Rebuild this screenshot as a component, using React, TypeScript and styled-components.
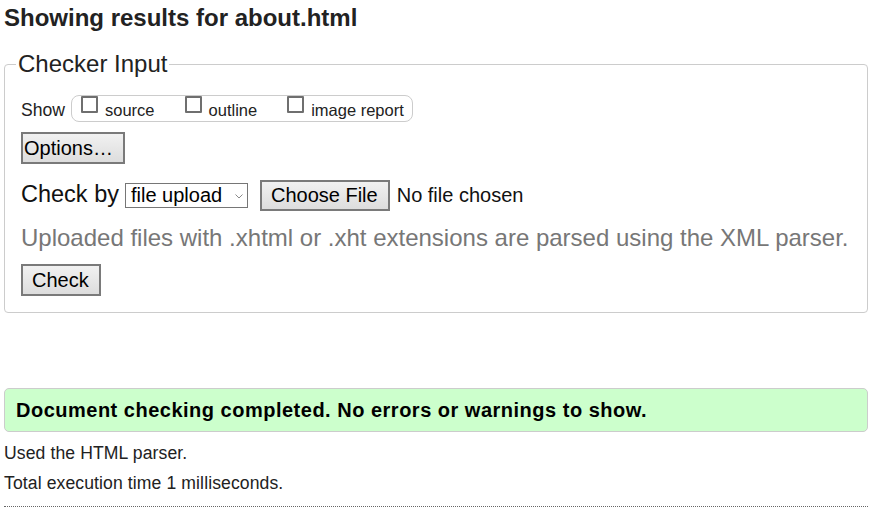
import React from "react";
import styled, { createGlobalStyle } from "styled-components";

const GlobalStyle = createGlobalStyle`
    html, body {
        margin: 0;
        padding: 0;
        background: #fff;
    }
    body {
        font-family: "Liberation Sans", Arial, sans-serif;
        color: #222;
    }
`

const Page = styled.div`
    padding: 4px 14px 0 4px;
`
const Heading = styled.h2`
    margin: 0;
    font-size: 24px;
    line-height: 28px;
    font-weight: bold;
`
const Fieldset = styled.fieldset`
    margin: 18px 0 0;
    padding: 0 16px 16px 11px;
    min-width: 0;
    border: 1px solid #ccc;
    border-radius: 4px;
`
const Legend = styled.legend`
    padding: 0 2px;
    font-size: 24px;
    line-height: 28px;
`
const FormBody = styled.div`
    padding: 17px 0 0 5px;
`
const ShowRow = styled.div`
    display: flex;
    align-items: flex-start;
    height: 27px;
`
const ShowLabel = styled.span`
    margin: 5px 6px 0 0;
    font-size: 17.6px;
    line-height: 20px;
`
const OptionBox = styled.div`
    display: flex;
    align-items: flex-start;
    box-sizing: border-box;
    height: 27px;
    padding: 0 8px 0 9px;
    border: 1px solid #ccc;
    border-radius: 8px;
`
const Option = styled.label`
    display: flex;
    align-items: flex-start;
    gap: 7px;
    & + & {
        margin-left: 30px;
    }
`
const CheckBox = styled.input`
    appearance: none;
    flex: none;
    margin: 0;
    width: 17px;
    height: 17px;
    box-sizing: border-box;
    border: 2px solid #6f6f6f;
    border-radius: 1px;
    background: #fff;
`
const OptionText = styled.span`
    margin-top: 5px;
    font-size: 16.5px;
    line-height: 19px;
    white-space: nowrap;
`
const Button = styled.button<{ $pad: string; $mt?: number }>`
    display: block;
    flex: none;
    margin: ${props => props.$mt || 0}px 0 0;
    padding: ${props => props.$pad};
    font-family: "Liberation Sans", Arial, sans-serif;
    font-size: 20px;
    line-height: 23px;
    color: #000;
    border: 2px solid #7a7a7a;
    border-radius: 0;
    background: linear-gradient(#f1f1f1, #dddddd);
`
const CheckRow = styled.div`
    display: flex;
    align-items: baseline;
    margin-top: 16px;
`
const CheckLabel = styled.span`
    margin-right: 6px;
    font-size: 23.5px;
    color: #111;
`
const SelectWrap = styled.span`
    position: relative;
    display: inline-block;
    margin-right: 12px;
`
const Select = styled.select`
    appearance: none;
    box-sizing: border-box;
    width: 123px;
    height: 25px;
    margin: 0;
    padding: 0 20px 0 5px;
    font-family: "Liberation Sans", Arial, sans-serif;
    font-size: 20px;
    line-height: 23px;
    color: #000;
    background: #fff;
    border: 1px solid #767676;
    border-radius: 0;
`
const Chevron = styled.svg`
    position: absolute;
    right: 5px;
    top: 11px;
    pointer-events: none;
`
const NoFile = styled.span`
    margin-left: 7px;
    font-size: 20px;
    color: #111;
`
const Hint = styled.p`
    margin: 13px 0 0;
    font-size: 24px;
    line-height: 28px;
    color: #777;
`
const Success = styled.div`
    margin-top: 75px;
    padding: 9px 11px;
    border: 1px solid #ccc;
    border-radius: 5px;
    background: #ccffcc;
    color: #000;
    font-size: 20px;
    line-height: 24px;
    font-weight: bold;
    letter-spacing: 0.5px;
`
const Note = styled.p<{ $mt: number }>`
    margin: ${props => props.$mt}px 0 0;
    font-size: 17.6px;
    line-height: 20px;
    letter-spacing: 0.1px;
`
const Rule = styled.hr`
    margin: 13px 0 0;
    border: 0;
    border-top: 1px dotted #666;
`

const options = ["source", "outline", "image report"];

function App() {
    return (
        <Page>
            <GlobalStyle />
            <Heading>Showing results for about.html</Heading>
            <Fieldset>
                <Legend>Checker Input</Legend>
                <FormBody>
                    <ShowRow>
                        <ShowLabel>Show</ShowLabel>
                        <OptionBox>
                            {options.map(name => (
                                <Option key={name}>
                                    <CheckBox type="checkbox" />
                                    <OptionText>{name}</OptionText>
                                </Option>
                            ))}
                        </OptionBox>
                    </ShowRow>
                    <Button type="button" $pad="3px 10px 2px 1px" $mt={10}>Options…</Button>
                    <CheckRow>
                        <CheckLabel>Check by</CheckLabel>
                        <SelectWrap>
                            <Select defaultValue="file">
                                <option value="file">file upload</option>
                                <option value="address">address</option>
                                <option value="text">text input</option>
                            </Select>
                            <Chevron width="8" height="5" viewBox="0 0 8 5">
                                <polyline points="0.5,0.5 4,4 7.5,0.5" fill="none" stroke="#8a8a8a" strokeWidth="1" />
                            </Chevron>
                        </SelectWrap>
                        <Button type="button" $pad="2px 10px 2px 9px">Choose File</Button>
                        <NoFile>No file chosen</NoFile>
                    </CheckRow>
                    <Hint>Uploaded files with .xhtml or .xht extensions are parsed using the XML parser.</Hint>
                    <Button type="submit" $pad="3px 10px 2px 9px" $mt={12}>Check</Button>
                </FormBody>
            </Fieldset>
            <Success>Document checking completed. No errors or warnings to show.</Success>
            <Note $mt={11}>Used the HTML parser.</Note>
            <Note $mt={10}>Total execution time 1 milliseconds.</Note>
            <Rule />
        </Page>
    )
}

export default App;
